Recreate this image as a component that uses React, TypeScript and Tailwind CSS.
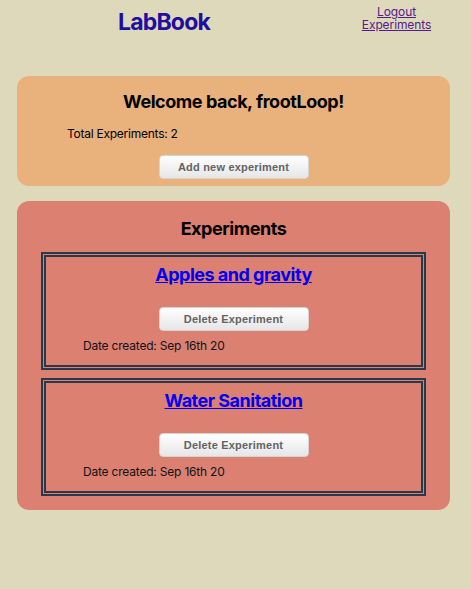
import React from "react";

const btn =
  "w-[150px] h-[24px] rounded-[4px] border border-[#d4d4d4] bg-gradient-to-b from-[#ffffff] to-[#e6e6e6] text-[11px] font-bold text-[#636363] [font-family:'Liberation_Sans',Arial,sans-serif] tracking-[0.2px]";

function Item({ title }: { title: string }) {
  return (
    <div className="mx-[24px] h-[118px] border-[5px] border-double border-[#27394a] flex flex-col">
      <a
        href="#"
        className="mt-[7px] text-center text-[18px] font-bold tracking-[-0.5px] text-[#0000ee] underline leading-[22px]"
      >
        {title}
      </a>
      <div className="mt-[21px] flex justify-center">
        <button className={btn}>Delete Experiment</button>
      </div>
      <div className="mt-[6px] pl-[37px] text-[12px] tracking-[-0.2px] leading-[18px] text-[#111]">
        Date created: Sep 16th 20
      </div>
    </div>
  );
}

export default function App() {
  return (
    <div className="min-h-[589px] bg-[#dfd9bc] [font-family:Inter,'Noto_Sans',sans-serif] text-black">
      <header className="flex h-[34px] pt-[3px]">
        <div className="w-[328px] text-center text-[23px] font-bold tracking-[-0.8px] leading-[38px] text-[#1f0f9e]">
          LabBook
        </div>
        <div className="w-[137px] flex flex-col items-center text-[12px] tracking-[-0.1px] leading-[13px] text-[#551a8b] pt-[2px]">
          <a href="#" className="underline">Logout</a>
          <a href="#" className="underline">Experiments</a>
        </div>
      </header>
      <section className="mt-[42px] ml-[17px] w-[433px] h-[110px] rounded-[12px] bg-[#e9b17b] flex flex-col">
        <h2 className="mt-[15px] text-center text-[18px] font-bold tracking-[-0.45px] leading-[22px]">
          Welcome back, frootLoop!
        </h2>
        <div className="mt-[12px] pl-[50px] text-[12px] tracking-[-0.25px] leading-[18px]">
          Total Experiments: 2
        </div>
        <div className="mt-[12px] flex justify-center">
          <button className={btn}>Add new experiment</button>
        </div>
      </section>
      <section className="mt-[15px] ml-[17px] w-[433px] h-[309px] rounded-[12px] bg-[#dc8072] flex flex-col">
        <h2 className="mt-[17px] text-center text-[18px] font-bold tracking-[-0.45px] leading-[22px]">
          Experiments
        </h2>
        <div className="mt-[12px] flex flex-col gap-[8px]">
          <Item title="Apples and gravity" />
          <Item title="Water Sanitation" />
        </div>
      </section>
    </div>
  );
}
